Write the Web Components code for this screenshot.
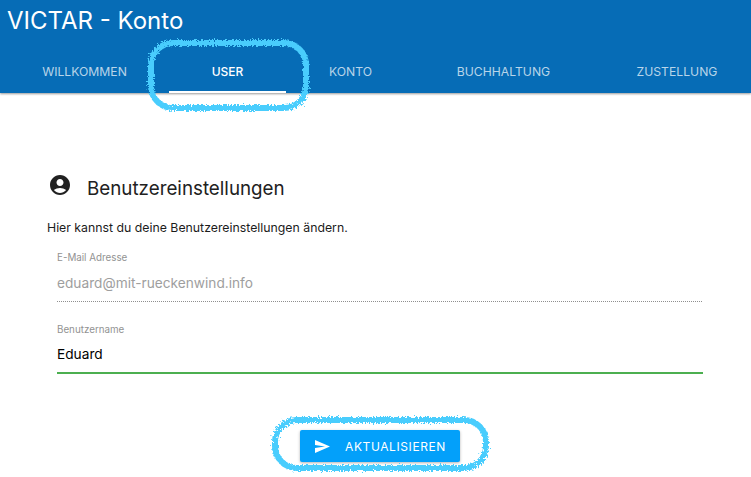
<!DOCTYPE html>
<html lang="de">
<head>
<meta charset="utf-8">
<title>VICTAR - Konto</title>
<style>
  html, body { margin: 0; padding: 0; background: #fff; }
  body { font-family: Inter, "Liberation Sans", sans-serif; width: 751px; height: 477px; overflow: hidden; position: relative; }
</style>
</head>
<body>
<app-shell>
  <app-bar heading="VICTAR - Konto" slot="bar">
    <nav-tab>WILLKOMMEN</nav-tab>
    <nav-tab active>USER</nav-tab>
    <nav-tab>KONTO</nav-tab>
    <nav-tab>BUCHHALTUNG</nav-tab>
    <nav-tab>ZUSTELLUNG</nav-tab>
  </app-bar>
  <settings-panel heading="Benutzereinstellungen" intro="Hier kannst du deine Benutzereinstellungen ändern.">
    <text-field label="E-Mail Adresse" value="eduard@mit-rueckenwind.info" disabled></text-field>
    <text-field label="Benutzername" value="Eduard" valid></text-field>
    <send-button slot="actions">AKTUALISIEREN</send-button>
  </settings-panel>
</app-shell>
<scribble-ring style="left:146px;top:38px" w="165" h="75" seed="4"></scribble-ring>
<scribble-ring style="left:270px;top:415px" w="221" h="58" seed="9"></scribble-ring>

<script>
class AppShell extends HTMLElement{
  constructor(){
    super()
    this.attachShadow({mode:'open'});
    this.shadowRoot.innerHTML = `
      <style>
        :host{ display:block; }
      </style>
      <slot name="bar"></slot>
      <slot></slot>
    `;
  }
}

class AppBar extends HTMLElement{
  constructor(){
    super()
    this.attachShadow({mode:'open'});
  }
  connectedCallback(){
    this.shadowRoot.innerHTML = `
      <style>
        :host{
          display:block;
          height:93px;
          background:#066cb6;
          box-shadow:0 1px 2px rgba(0,0,0,.4);
        }
        h1{
          margin:0;
          padding:7px 0 0 7px;
          height:42px;
          box-sizing:border-box;
          font:400 24px/28px Inter, "Liberation Sans", sans-serif;
          color:#fff;
        }
        .tabs{
          display:grid;
          grid-template-columns:169px 117px 129px 177px 159px;
          height:51px;
        }
      </style>
      <h1>${this.getAttribute('heading')}</h1>
      <div class="tabs"><slot></slot></div>
    `;
  }
}

class NavTab extends HTMLElement{
  constructor(){
    super()
    this.attachShadow({mode:'open'});
    this.shadowRoot.innerHTML = `
      <style>
        :host{
          display:flex;
          align-items:center;
          justify-content:center;
          box-sizing:border-box;
          padding-top:8px;
          font:400 12.2px Inter, "Liberation Sans", sans-serif;
          color:rgba(255,255,255,.72);
        }
        :host([active]){
          color:#fff;
          font-weight:500;
          font-size:12px;
          border-bottom:2px solid #fff;
          padding-top:10px;
        }
        :host(:last-child){ padding-left:11px; }
      </style>
      <slot></slot>
    `;
  }
}

class SettingsPanel extends HTMLElement{
  constructor(){
    super()
    this.attachShadow({mode:'open'});
  }
  connectedCallback(){
    this.shadowRoot.innerHTML = `
      <style>
        :host{
          display:block;
          padding:80px 48px 0 47px;
        }
        header{
          display:flex;
          align-items:center;
          gap:15px;
          height:32px;
          padding-left:1px;
        }
        svg{ width:24px; height:24px; fill:#212121; flex:none; margin-top:-8px; }
        h2{
          margin:0;
          font:400 18.8px/32px Inter, "Liberation Sans", sans-serif;
          color:#212121;
        }
        p{
          margin:14px 0 0;
          font:400 12.3px/18px Inter, "Liberation Sans", sans-serif;
          color:#1c1c1c;
        }
        .fields{
          display:flex;
          flex-direction:column;
          gap:18px;
          padding:14px 0 0 10px;
        }
        .actions{
          display:flex;
          justify-content:center;
          margin-top:53px;
          padding-left:10px;
        }
      </style>
      <header>
        <svg viewBox="0 0 24 24"><path d="M12 2C6.48 2 2 6.48 2 12s4.48 10 10 10 10-4.48 10-10S17.52 2 12 2zm0 4c1.93 0 3.5 1.57 3.5 3.5S13.93 13 12 13s-3.5-1.57-3.5-3.5S10.07 6 12 6zm0 14c-2.03 0-4.43-.82-6.14-2.88C7.55 15.8 9.68 15 12 15s4.45.8 6.14 2.12C16.43 19.18 14.03 20 12 20z"/></svg>
        <h2>${this.getAttribute('heading')}</h2>
      </header>
      <p>${this.getAttribute('intro')}</p>
      <div class="fields"><slot></slot></div>
      <div class="actions"><slot name="actions"></slot></div>
    `;
  }
}

class TextField extends HTMLElement{
  constructor(){
    super()
    this.attachShadow({mode:'open'});
  }
  connectedCallback(){
    this.shadowRoot.innerHTML = `
      <style>
        :host{
          display:block;
          height:54px;
          box-sizing:border-box;
          font-family:Inter, "Liberation Sans", sans-serif;
        }
        label{
          display:block;
          padding-top:1px;
          font-size:9.8px;
          line-height:12px;
          color:#929292;
        }
        .value{
          margin-top:6px;
          font-size:13.7px;
          line-height:24px;
          height:30px;
          color:#000;
        }
        .line{ height:2px; background:#4caf50; }
        :host([disabled]) .value{ margin-top:7px; color:#9e9e9e; }
        :host([disabled]) .line{
          height:1px;
          background:repeating-linear-gradient(90deg,#8f8f8f 0 1px,transparent 1px 2px);
        }
      </style>
      <label>${this.getAttribute('label')}</label>
      <div class="value">${this.getAttribute('value')}</div>
      <div class="line"></div>
    `;
  }
}

class SendButton extends HTMLElement{
  constructor(){
    super()
    this.attachShadow({mode:'open'});
    this.shadowRoot.innerHTML = `
      <style>
        :host{
          display:inline-flex;
          align-items:center;
          box-sizing:border-box;
          width:160px;
          height:32px;
          padding-left:15px;
          gap:15px;
          border-radius:2px;
          background:#03a0fa;
          color:#fff;
          font:400 12px Inter, "Liberation Sans", sans-serif;
          letter-spacing:.6px;
          box-shadow:0 1px 3px rgba(0,0,0,.3);
        }
        svg{ width:15px; height:13px; fill:#fff; flex:none; }
      </style>
      <svg viewBox="0 0 15 13"><path d="M0 0l15 6.5L0 13V8l10-1.5L0 5z"/></svg>
      <slot></slot>
    `;
  }
}

// the hand drawn marker rings on top of the screenshot
class ScribbleRing extends HTMLElement{
  constructor(){
    super()
    this.attachShadow({mode:'open'});
  }
  connectedCallback(){
    const w = +this.getAttribute('w'), h = +this.getAttribute('h');
    const id = 'rough' + w;
    this.shadowRoot.innerHTML = `
      <style>
        :host{ display:block; position:absolute; pointer-events:none; }
        svg{ display:block; overflow:visible; }
      </style>
      <svg width="${w}" height="${h}" viewBox="0 0 ${w} ${h}">
        <filter id="${id}" x="-10%" y="-20%" width="120%" height="140%">
          <feTurbulence type="fractalNoise" baseFrequency=".6" numOctaves="3" seed="${this.getAttribute('seed')}"/>
          <feDisplacementMap in="SourceGraphic" scale="6"/>
        </filter>
        <rect x="5" y="5" width="${w-10}" height="${h-10}" rx="22" fill="none" stroke="#48cdfd" stroke-width="6" filter="url(#${id})"/>
      </svg>
    `;
  }
}

customElements.define('app-shell',AppShell);
customElements.define('app-bar',AppBar);
customElements.define('nav-tab',NavTab);
customElements.define('settings-panel',SettingsPanel);
customElements.define('text-field',TextField);
customElements.define('send-button',SendButton);
customElements.define('scribble-ring',ScribbleRing);
</script>
</body>
</html>
